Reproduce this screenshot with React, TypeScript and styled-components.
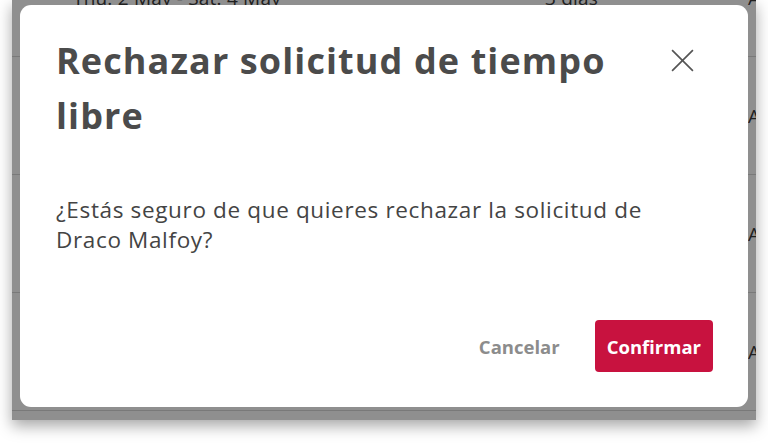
import React from "react";
import styled, { createGlobalStyle } from "styled-components";

// Time-off reject confirmation dialog shown over the requests table

const GlobalStyle = createGlobalStyle`
  html, body { margin: 0; padding: 0; background: #ffffff; }
  body { font-family: "Open Sans", "Noto Sans", sans-serif; }
  * { box-sizing: border-box; }
`;

const Stage = styled.div`
  width: 768px;
  height: 445px;
  padding: 0 12px;
  overflow: hidden;
`;

const Screen = styled.div`
  position: relative;
  height: 420px;
  background: #ffffff;
  overflow: hidden;
  box-shadow: 0 6px 14px rgba(0, 0, 0, 0.35);
`;

const Table = styled.div`
  display: flex;
  flex-direction: column;
  margin-top: -61px;
`;

const Row = styled.div`
  display: flex;
  align-items: center;
  height: 118px;
  padding-left: 61px;
  border-bottom: 1px solid #d8d8d8;
  font-size: 19px;
  letter-spacing: 0.2px;
  color: #3a3a3a;
  white-space: nowrap;
`;

const Cell = styled.div<{ w?: number }>`
  flex: 0 0 ${({ w }) => (w ? `${w}px` : "auto")};
`;

const Overlay = styled.div`
  position: absolute;
  inset: 0;
  background: rgba(0, 0, 0, 0.44);
  display: flex;
  padding: 5px 8px 13px;
`;

const Dialog = styled.div`
  flex: 1;
  display: flex;
  flex-direction: column;
  background: #ffffff;
  border-radius: 11px;
  padding: 28px 35px 35px 36px;
`;

const Header = styled.div`
  display: flex;
  align-items: flex-start;
  gap: 20px;
`;

const Title = styled.h2`
  flex: 1;
  margin: 0;
  font-size: 36px;
  line-height: 55px;
  font-weight: 700;
  color: #4b4b4b;
  letter-spacing: 1.1px;
`;

const CloseButton = styled.button`
  display: flex;
  align-items: center;
  justify-content: center;
  width: 28px;
  height: 28px;
  margin: 13px 17px 0 0;
  padding: 0;
  border: none;
  background: transparent;
  color: #555555;
  cursor: pointer;
  svg { width: 25px; height: 25px; }
`;

const Message = styled.p`
  max-width: 600px;
  margin: 52px 0 0;
  font-size: 22.5px;
  line-height: 30px;
  letter-spacing: 0.65px;
  color: #444444;
`;

const Footer = styled.div`
  margin-top: auto;
  display: flex;
  justify-content: flex-end;
  align-items: center;
  gap: 35px;
`;

const ActionButton = styled.button<{ primary?: boolean }>`
  height: 52px;
  padding: 0 ${({ primary }) => (primary ? "12px" : "0")};
  border: none;
  border-radius: 4px;
  font-family: inherit;
  font-size: 18.5px;
  font-weight: 700;
  cursor: pointer;
  background: ${({ primary }) => (primary ? "#c8123f" : "transparent")};
  color: ${({ primary }) => (primary ? "#ffffff" : "#8c8c8c")};
`;

const rows = [0, 1, 2, 3];

export default function App() {
  return (
    <>
      <GlobalStyle />
      <Stage>
        <Screen>
          <Table>
            {rows.map((r) => (
              <Row key={r}>
                <Cell w={472}>Thu. 2 May - Sat. 4 May</Cell>
                <Cell w={203}>3 días</Cell>
                <Cell>Aprobado</Cell>
              </Row>
            ))}
          </Table>
          <Overlay>
            <Dialog role="dialog" aria-modal="true">
              <Header>
                <Title>Rechazar solicitud de tiempo libre</Title>
                <CloseButton aria-label="Cerrar">
                  <svg viewBox="0 0 24 24" fill="none" aria-hidden="true">
                    <path d="M2 2 L22 22 M22 2 L2 22" stroke="currentColor" strokeWidth="1.6" />
                  </svg>
                </CloseButton>
              </Header>
              <Message>
                ¿Estás seguro de que quieres rechazar la solicitud de Draco Malfoy?
              </Message>
              <Footer>
                <ActionButton>Cancelar</ActionButton>
                <ActionButton primary>Confirmar</ActionButton>
              </Footer>
            </Dialog>
          </Overlay>
        </Screen>
      </Stage>
    </>
  );
}
